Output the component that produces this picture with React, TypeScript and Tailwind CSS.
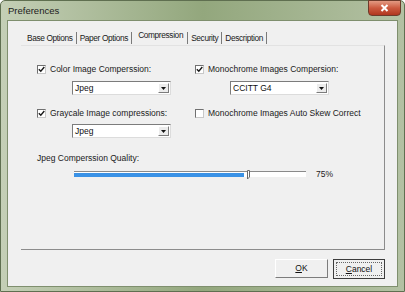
import React from 'react'

const font = { fontFamily: '"Liberation Sans", Arial, sans-serif' }

function CheckBox({ checked, label }: { checked: boolean; label: string }) {
  return (
    <div className="flex items-center gap-[4px] h-[13px]">
      <div className="w-[9px] h-[9px] bg-white border border-t-[#707070] border-l-[#707070] border-r-[#c8c8c8] border-b-[#c8c8c8] flex items-center justify-center">
        {checked && (
          <svg width="7" height="7" viewBox="0 0 7 7">
            <path d="M0.8 3.2 L2.8 5.3 L6.3 1" stroke="#1a1a1a" strokeWidth="1.4" fill="none" />
          </svg>
        )}
      </div>
      <span className="text-[8.5px] text-[#1a1a1a] leading-none">{label}</span>
    </div>
  )
}

function Select({ value }: { value: string }) {
  return (
    <div className="flex w-[99px] h-[14px] bg-white border border-t-[#7c7c7c] border-l-[#7c7c7c] border-r-[#dcdcdc] border-b-[#dcdcdc]">
      <div className="flex-1 flex items-center pl-[2px] text-[8.5px] text-[#111] leading-none">{value}</div>
      <div className="w-[11px] my-[1px] mr-[1px] bg-[#ececec] border border-t-white border-l-white border-r-[#7c7c7c] border-b-[#7c7c7c] flex items-center justify-center">
        <svg width="5" height="3" viewBox="0 0 5 3">
          <path d="M0 0 H5 L2.5 3 Z" fill="#111" />
        </svg>
      </div>
    </div>
  )
}

function Tab({ label, active }: { label: string; active?: boolean }) {
  return (
    <div
      className={`px-[3px] text-[8.3px] tracking-[-0.35px] text-[#1a1a1a] leading-none flex items-center ${
        active ? 'h-[14px] mb-[3px] px-[4px]' : 'h-[12px] mb-[1px] border-r border-[#7a7a7a]'
      }`}
    >
      {label}
    </div>
  )
}

export default function App() {
  return (
    <div
      className="w-[405px] h-[292px] bg-gradient-to-r from-[#c4cfb6] via-[#93a77d] to-[#b3c1a3] flex flex-col rounded-t-[5px] border border-[#5f6f50]"
      style={font}
    >
      <div className="h-[19px] flex items-start justify-between pl-[7px] pr-[3px]">
        <span className="text-[9.5px] text-[#1b1b1b] mt-[5px] leading-none">Preferences</span>
        <div className="w-[33px] h-[16px] -mt-[1px] rounded-b-[4px] bg-gradient-to-b from-[#e39a83] via-[#cc5a3f] to-[#b0361f] border border-[#6e3b2b] flex items-center justify-center">
          <svg width="9" height="8" viewBox="0 0 9 8">
            <path d="M1.5 1 L7.5 7 M7.5 1 L1.5 7" stroke="#fff" strokeWidth="2" />
          </svg>
        </div>
      </div>
      <div className="flex-1 mx-[6px] mb-[4px] bg-[#f0f0f0] border border-[#7f8f6e] flex flex-col pt-[9px] pl-[13px] pr-[12px]">
        <div className="flex items-end h-[15px] pl-[3px]">
          <Tab label="Base Options" />
          <Tab label="Paper Options" />
          <div className="pl-[2px]">
            <Tab label="Compression" active />
          </div>
          <div className="border-l border-[#7a7a7a] h-[12px] mb-[1px]" />
          <Tab label="Security" />
          <Tab label="Description" />
        </div>
        <div className="h-[205px] border-t border-t-[#e2e2e2] border-r border-b border-[#8c8c8c] pt-[17px] pl-[16px] flex flex-col">
          <div className="flex">
            <div className="w-[158px] flex flex-col">
              <CheckBox checked label="Color Image Comperssion:" />
              <div className="pl-[35px] mt-[5px]">
                <Select value="Jpeg" />
              </div>
              <div className="mt-[12px]">
                <CheckBox checked label="Graycale Image compressions:" />
              </div>
              <div className="pl-[35px] mt-[4px]">
                <Select value="Jpeg" />
              </div>
            </div>
            <div className="flex flex-col">
              <CheckBox checked label="Monochrome Images Compersion:" />
              <div className="pl-[35px] mt-[5px]">
                <Select value="CCITT G4" />
              </div>
              <div className="mt-[12px]">
                <CheckBox checked={false} label="Monochrome Images Auto Skew Correct" />
              </div>
            </div>
          </div>
          <div className="mt-[14px] h-[12px] flex items-center text-[8.5px] text-[#1a1a1a] leading-none">
            Jpeg Comperssion Quality:
          </div>
          <div className="flex items-center h-[10px] mt-[5px] pl-[37px]">
            <div className="relative w-[232px] h-[6px] bg-white border-t border-[#8a8a8a]">
              <div className="h-[4px] w-[170px] mt-[0.5px] bg-[#3a92e6]" />
              <svg className="absolute left-[172px] -top-[2px]" width="5" height="10" viewBox="0 0 5 10">
                <path d="M1.5 0.5 H3.5 V7 L1.5 9 Z" stroke="#6a6a6a" fill="#fff" strokeWidth="1" />
              </svg>
            </div>
            <span className="ml-[10px] text-[8.5px] text-[#222] leading-none">75%</span>
          </div>
        </div>
        <div className="flex justify-end gap-[5px] mt-[9px]">
          <div className="w-[53px] h-[19px] bg-[#f0f0f0] border border-t-[#fff] border-l-[#fff] border-r-[#7c7c7c] border-b-[#7c7c7c] flex items-center justify-center text-[8.5px] text-[#111] leading-none">
            <span>
              <span className="underline">O</span>K
            </span>
          </div>
          <div className="w-[52px] h-[20px] bg-[#f0f0f0] border border-[#3c3c3c] flex items-center justify-center">
            <div className="w-[46px] h-[14px] border border-dotted border-[#666] flex items-center justify-center text-[8.5px] text-[#111] leading-none">
              <span>
                <span className="underline">C</span>ancel
              </span>
            </div>
          </div>
        </div>
      </div>
    </div>
  )
}
